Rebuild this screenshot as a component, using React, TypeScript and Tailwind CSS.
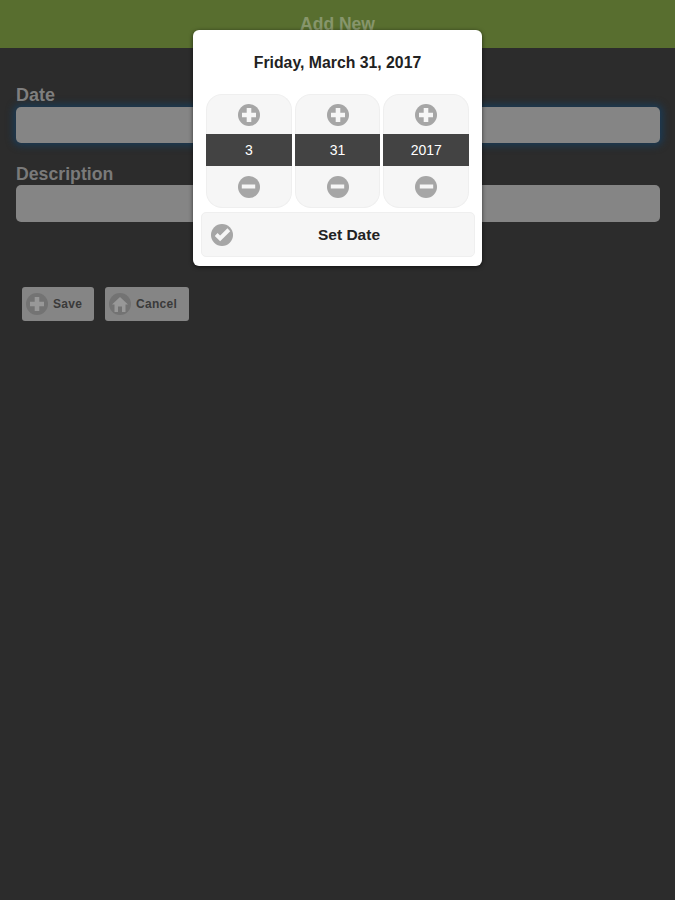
import { Check, Minus, Plus } from "lucide-react";

const font = "font-['Liberation_Sans',Arial,sans-serif]";

// round grey glyph used by the picker and the form buttons
function RoundIcon({ kind, bg = "bg-[#a6a6a6]", fg = "#f6f6f6" }: { kind: "plus" | "minus" | "check" | "home"; bg?: string; fg?: string }) {
  return (
    <span className={`flex h-[22px] w-[22px] shrink-0 items-center justify-center overflow-hidden rounded-full ${bg}`}>
      {kind === "plus" && <Plus size={24} color={fg} strokeWidth={4.6} strokeLinecap="butt" className="shrink-0" />}
      {kind === "minus" && <Minus size={23} color={fg} strokeWidth={4.2} strokeLinecap="butt" className="shrink-0" />}
      {kind === "check" && <Check size={19} color={fg} strokeWidth={5} strokeLinecap="butt" strokeLinejoin="miter" className="shrink-0" />}
      {kind === "home" && (
        <svg width="18" height="18" viewBox="0 0 18 18" className="shrink-0">
          <path d="M9 2 L17 9.5 L14.5 9.5 L14.5 17 L11 17 L11 11.5 L7 11.5 L7 17 L3.5 17 L3.5 9.5 L1 9.5 Z" fill={fg} />
        </svg>
      )}
    </span>
  );
}

function PickerColumn({ value }: { value: string }) {
  return (
    <div className="flex w-[85.7px] flex-col">
      <div className="flex h-[40px] items-center justify-center rounded-t-[16px] border border-b-0 border-[#efefef] bg-[#f6f6f6]">
        <RoundIcon kind="plus" />
      </div>
      <div className="flex h-[32px] items-center justify-center bg-[#434343] text-[14px] text-white">{value}</div>
      <div className="flex h-[42px] items-center justify-center rounded-b-[16px] border border-t-0 border-[#efefef] bg-[#f6f6f6]">
        <RoundIcon kind="minus" />
      </div>
    </div>
  );
}

function FormButton({ kind, label, width }: { kind: "plus" | "home"; label: string; width: string }) {
  return (
    <button type="button" className={`flex h-[34px] items-center gap-[5px] rounded-[3px] bg-[#858585] pl-[4px] text-[12px] font-bold tracking-[0.3px] text-[#3a3a3a] ${width}`}>
      <RoundIcon kind={kind} bg="bg-[#737373]" fg="#989898" />
      {label}
    </button>
  );
}

export default function App() {
  return (
    <div className={`relative h-[900px] w-[675px] overflow-hidden bg-[#2c2c2c] ${font}`}>
      <header className="flex h-[48px] items-center justify-center bg-[#586e2f] text-[17.5px] font-bold text-[#87966c]">
        Add New
      </header>

      <div className="pl-4 pr-[15px] pt-[36px]">
        <label className="block h-[23px] text-[18px] font-bold leading-[22px] text-[#7f7f7f]">Date</label>
        <div className="h-[36px] rounded-[5px] bg-[#858585] shadow-[0_0_7px_3px_#1b3a54]" />
        <label className="mt-[21px] block h-[21px] text-[17.7px] font-bold leading-[20px] text-[#7a7a7a]">Description</label>
        <div className="h-[37px] rounded-[5px] bg-[#858585]" />

        <div className="mt-[65px] flex gap-[11px] pl-[6px]">
          <FormButton kind="plus" label="Save" width="w-[72px]" />
          <FormButton kind="home" label="Cancel" width="w-[84px]" />
        </div>
      </div>

      {/* date picker dialog */}
      <div className="absolute left-[193px] top-[30px] flex h-[236px] w-[289px] flex-col rounded-[6px] bg-white px-2 shadow-[0_1px_4px_rgba(0,0,0,0.6)]">
        <div className="flex h-[64px] items-center justify-center pt-[2px] text-[15.8px] font-bold text-[#222]">Friday, March 31, 2017</div>
        <div className="flex gap-[3px] pl-[5px]">
          <PickerColumn value="3" />
          <PickerColumn value="31" />
          <PickerColumn value="2017" />
        </div>
        <button type="button" className="relative mt-[4px] flex h-[45px] w-[274px] items-center justify-center rounded-[5px] border border-[#efefef] bg-[#f6f6f6] pl-[22px] text-[15.5px] font-bold text-[#222]">
          <span className="absolute left-[9px]">
            <RoundIcon kind="check" />
          </span>
          Set Date
        </button>
      </div>
    </div>
  );
}
